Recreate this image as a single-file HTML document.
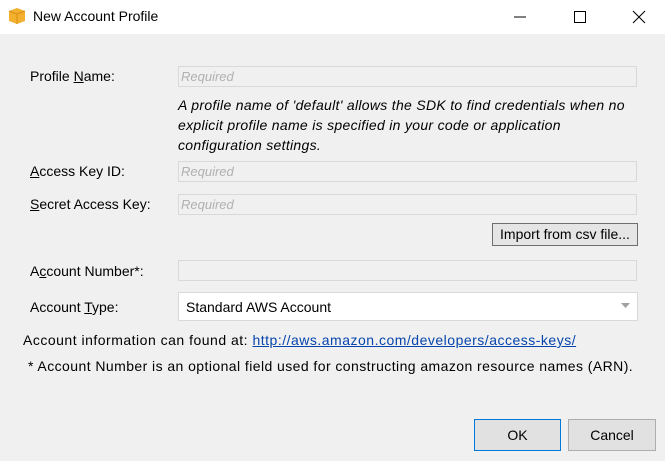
<!DOCTYPE html>
<html><head><style>
body{margin:0;width:665px;height:461px;background:#f0f0f0;font-family:"Liberation Sans",sans-serif;font-size:14px;color:#000;position:relative;overflow:hidden}
.a{position:absolute;white-space:nowrap}
.tb{position:absolute;left:0;top:0;width:665px;height:34px;background:#fff}
.in{position:absolute;left:178px;width:455px;height:19px;border:1px solid #d9d9d9;background:#f0f0f0;color:#b0b0b0;font-style:italic;font-size:13px;line-height:19px;padding-left:2px;box-sizing:content-box}
.btn{position:absolute;background:#e1e1e1;border:1px solid #adadad;text-align:center;font-size:14px}
u{text-decoration:underline}
</style></head><body>
<div class="tb"></div>
<svg class="a" style="left:8px;top:7px" width="18" height="18" viewBox="0 0 18 18"><path d="M1 4 L9 1 L17 4 L17 14 L9 17 L1 14Z" fill="#f3b02f"/><path d="M1 4 L9 7 L17 4 M9 7 L9 17" stroke="#d98f12" fill="none"/></svg>
<div class="a" style="left:33px;top:8px;font-size:14px">New Account Profile</div>
<svg class="a" style="left:510px;top:9px" width="140" height="16"><line x1="4" y1="8" x2="16" y2="8" stroke="#000"/><rect x="64.5" y="2.5" width="11" height="11" fill="none" stroke="#000"/><path d="M123 2 L135 14 M135 2 L123 14" stroke="#000"/></svg>
<div class="a" style="left:30px;top:68px">Profile <u>N</u>ame:</div>
<div class="in" style="top:66px">Required</div>
<div class="a" style="left:178px;top:95px;font-style:italic;line-height:20px;font-size:14px;letter-spacing:0.3px">A profile name of 'default' allows the SDK to find credentials when no<br>explicit profile name is specified in your code or application<br>configuration settings.</div>
<div class="a" style="left:30px;top:163px"><u>A</u>ccess Key ID:</div>
<div class="in" style="top:161px">Required</div>
<div class="a" style="left:30px;top:196px"><u>S</u>ecret Access Key:</div>
<div class="in" style="top:194px">Required</div>
<div class="btn" style="left:492px;top:223px;width:144px;height:21px;line-height:21px;border-color:#6f6f6f;background:#e5e5e5">Import from csv file...</div>
<div class="a" style="left:30px;top:263px">A<u>c</u>count Number*:</div>
<div class="in" style="top:260px"></div>
<div class="a" style="left:30px;top:299px">Account <u>T</u>ype:</div>
<div class="a" style="left:178px;top:292px;width:458px;height:27px;background:#fff;border:1px solid #d9d9d9"><span class="a" style="left:7px;top:6px">Standard AWS Account</span><svg class="a" style="left:442px;top:10px" width="9" height="6"><path d="M0 0 L9 0 L4.5 5Z" fill="#a0a0a0"/></svg></div>
<div class="a" style="left:23px;top:332px;letter-spacing:0.5px">Account information can found at: <span style="color:#0645ad;text-decoration:underline">http://aws.amazon.com/developers/access-keys/</span></div>
<div class="a" style="left:28px;top:358px;letter-spacing:0.43px">* Account Number is an optional field used for constructing amazon resource names (ARN).</div>
<div class="btn" style="left:474px;top:419px;width:85px;height:30px;line-height:30px;border-color:#0078d7">OK</div>
<div class="btn" style="left:568px;top:419px;width:86px;height:30px;line-height:30px">Cancel</div>
</body></html>
